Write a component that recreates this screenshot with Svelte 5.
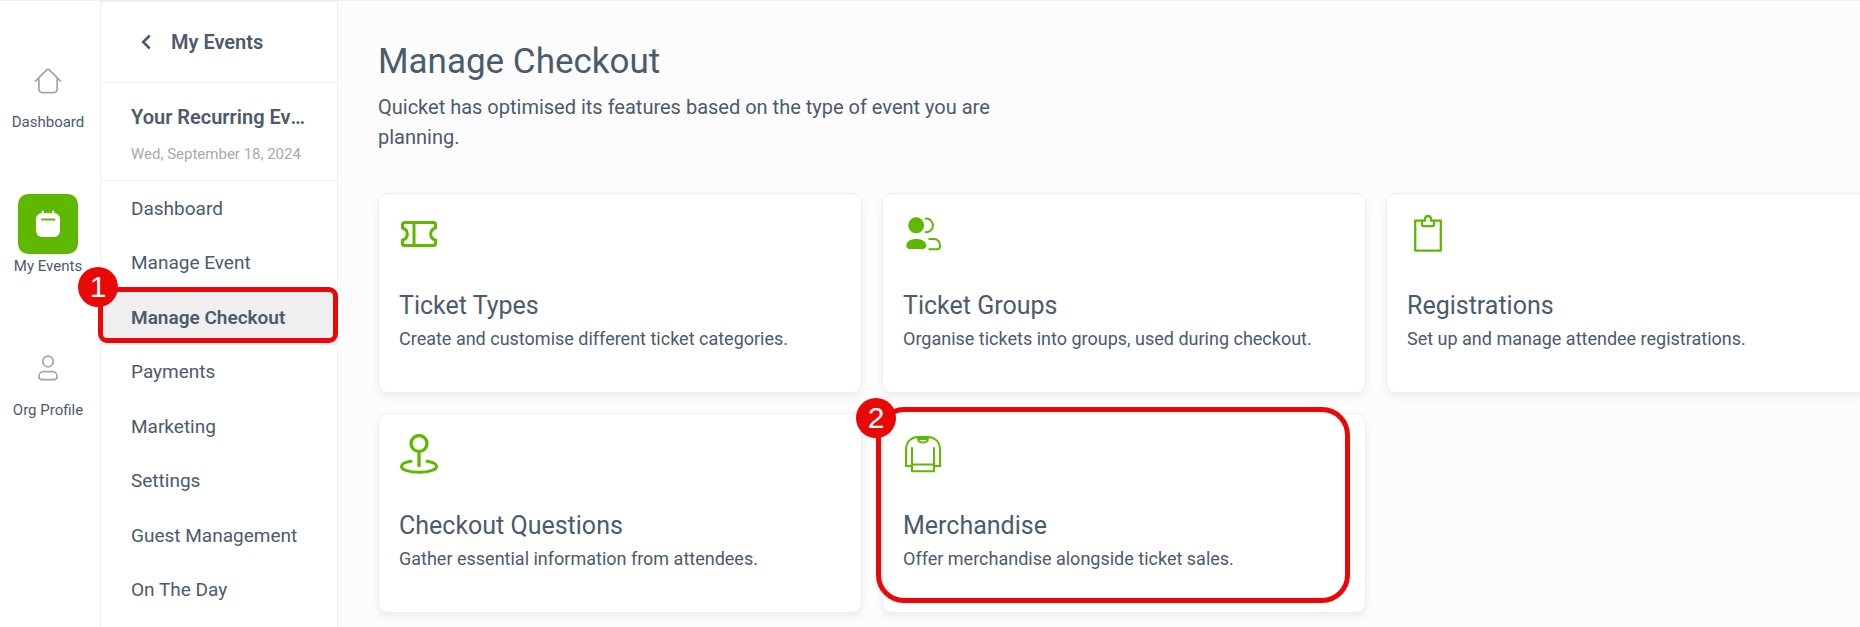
<script lang="ts">
  const eventName = 'Your Recurring Event';
  const eventDate = 'Wed, September 18, 2024';

  const railLinks = [
    { label: 'Dashboard', icon: 'home', active: false },
    { label: 'My Events', icon: 'calendar', active: true },
    { label: 'Org Profile', icon: 'person', active: false }
  ];

  //step marks the items that carry a numbered callout
  const menu = [
    { label: 'Dashboard' },
    { label: 'Manage Event' },
    { label: 'Manage Checkout', active: true, step: 1 },
    { label: 'Payments' },
    { label: 'Marketing' },
    { label: 'Settings' },
    { label: 'Guest Management' },
    { label: 'On The Day' }
  ];

  const cards = [
    { title: 'Ticket Types', text: 'Create and customise different ticket categories.', icon: 'ticket' },
    { title: 'Ticket Groups', text: 'Organise tickets into groups, used during checkout.', icon: 'groups' },
    { title: 'Registrations', text: 'Set up and manage attendee registrations.', icon: 'clipboard' },
    { title: 'Checkout Questions', text: 'Gather essential information from attendees.', icon: 'pin' },
    { title: 'Merchandise', text: 'Offer merchandise alongside ticket sales.', icon: 'shirt', step: 2 }
  ];
</script>

<div class="layout">
  <nav class="rail" aria-label="Main">
    {#each railLinks as link}
      <a class="rail-link" href="#{link.icon}">
        <span class="rail-icon" class:active={link.active}>
          <svg width="30" height="30" viewBox="0 0 30 30" fill="none" stroke="currentColor" stroke-width="1.7" stroke-linecap="round" stroke-linejoin="round" aria-hidden="true">
            {#if link.icon === 'home'}
              <path d="M2.500 16.200 13.400 5.100a2.200 2.200 0 0 1 3.200 0L27.500 16.200" />
              <path d="M5.900 13v11.600a3 3 0 0 0 3 3h12.200a3 3 0 0 0 3-3V13" />
            {:else if link.icon === 'calendar'}
              <rect x="3" y="4" width="24" height="24" rx="6" fill="currentColor" stroke="none" />
              <path d="M9.700 2.500v3M20.300 2.500v3" stroke-width="2" />
              <path class="slot" d="M9 10.500h12.400" stroke-width="2" />
            {:else}
              <circle cx="15" cy="8.500" r="5.300" />
              <path d="M10.600 18.700h8.800a4.700 4.700 0 0 1 4.700 4.700c0 2-1.300 3.200-3.200 3.200H9.100c-1.900 0-3.200-1.200-3.200-3.200a4.700 4.700 0 0 1 4.700-4.700Z" />
            {/if}
          </svg>
        </span>
        {link.label}
      </a>
    {/each}
  </nav>

  <aside class="sidebar">
    <a class="back" href="#events">
      <svg width="10" height="16" viewBox="0 0 10 16" fill="none" stroke="currentColor" stroke-width="2.600" aria-hidden="true">
        <path d="M8.700 1.500 2.200 8l6.500 6.500" />
      </svg>
      My Events
    </a>
    <div class="event">
      <h2>{eventName}</h2>
      <p>{eventDate}</p>
    </div>
    <nav class="menu" aria-label="Event">
      {#each menu as item}
        <a class:active={item.active} href="#menu">
          {item.label}
          {#if item.step}
            <span class="callout callout-menu"><b>{item.step}</b></span>
          {/if}
        </a>
      {/each}
    </nav>
  </aside>

  <main>
    <h1>Manage Checkout</h1>
    <p class="intro">Quicket has optimised its features based on the type of event you are planning.</p>

    <div class="cards">
      {#each cards as card}
        <a class="card" href="#{card.icon}">
          <svg width="40" height="40" viewBox="0 0 40 40" fill="none" stroke="currentColor" stroke-width="2" aria-hidden="true">
            {#if card.icon === 'ticket'}
              <path stroke-width="3" stroke-linejoin="round" d="M5.500 8.500h29a2 2 0 0 1 2 2v3.500c-3 .8-4.800 3-4.800 6s1.800 5.200 4.800 6v3.500a2 2 0 0 1-2 2h-29a2 2 0 0 1-2-2V26c3-.8 4.800-3 4.800-6s-1.800-5.200-4.800-6v-3.500a2 2 0 0 1 2-2ZM15 8.500v23" />
            {:else if card.icon === 'groups'}
              <circle cx="13.200" cy="11.300" r="8" fill="currentColor" stroke="none" />
              <path d="M12 25h2.500c5 0 8.700 3 8.700 6.500 0 2-1.300 3.500-3.500 3.500H6.800c-2.200 0-3.500-1.500-3.500-3.500C3.300 28 7 25 12 25Z" fill="currentColor" stroke="none" />
              <path d="M22 4.700a6.800 6.800 0 1 1 0 13.400M25.500 25H31a6 6 0 0 1 6 6v1.300a3 3 0 0 1-3 3h-8.500" />
            {:else if card.icon === 'clipboard'}
              <path stroke-width="2.300" stroke-linejoin="round" d="M15 6.700H8.200v30h25.600v-30H27" />
              <path stroke-width="2.300" stroke-linejoin="round" d="M15 6.700h3V5a3 3 0 0 1 6 0v1.700h3v3.500a2 2 0 0 1-2 2h-8a2 2 0 0 1-2-2Z" />
            {:else if card.icon === 'pin'}
              <circle cx="20" cy="9.500" r="8" stroke-width="3.300" />
              <path stroke-width="3.300" stroke-linecap="round" d="M20 18v13.500" />
              <path stroke-width="3" stroke-linecap="round" d="M12 27.200C6 28.100 2.500 30.200 2.500 32.500c0 3.300 7.800 5.700 17.500 5.700s17.500-2.400 17.500-5.700c0-2.300-3.500-4.400-9.500-5.300" />
            {:else}
              <path d="M9 32H3V16C3 7 9 3 15 3h10c6 0 12 4 12 13v16h-6" />
              <path stroke-linecap="round" d="M9 14v23.200h22V14M9 30.500h22" />
              <path d="M15 3v1.500c0 2.500 2 4 5 4s5-1.500 5-4V3M15.500 5h9" stroke-width="1.800" />
            {/if}
          </svg>
          <h3>{card.title}</h3>
          <p>{card.text}</p>
          {#if card.step}
            <span class="callout callout-card"><b>{card.step}</b></span>
          {/if}
        </a>
      {/each}
    </div>
  </main>
</div>

<style>
  :global(body) {
    background: #fcfcfc;
  }

  .layout {
    display: flex;
    min-height: 100vh;
    box-sizing: border-box;
    overflow: hidden;
    border-top: 1px solid #efefef;
    font-family: Roboto, "Liberation Sans", sans-serif;
    color: #4a5b6d;
  }

  a {
    color: inherit;
    text-decoration: none;
  }

  h1,
  h2,
  h3,
  p {
    margin: 0;
  }

  /* narrow rail on the far left */
  .rail {
    flex: 0 0 96px;
    display: flex;
    flex-direction: column;
    gap: 60px;
    padding: 49px 4px 0 0;
    background: #fff;
  }

  .rail-link {
    display: flex;
    flex-direction: column;
    align-items: center;
    font-size: 15px;
    line-height: 24px;
  }

  .rail-icon {
    display: flex;
    justify-content: center;
    align-items: center;
    width: 60px;
    height: 60px;
    border-radius: 10px;
    color: #a5a5a9;
  }

  .rail-icon.active {
    background: #5eb800;
    color: #fff;
  }

  .slot {
    stroke: #5eb800;
  }

  .sidebar {
    flex: 0 0 236px;
    min-width: 0;
    border: 1px solid #efefef;
    border-bottom: none;
    background: #fff;
  }

  .back {
    display: flex;
    align-items: center;
    gap: 20px;
    height: 80px;
    padding-left: 40px;
    border-bottom: 1px solid #efefef;
    font-size: 20px;
    font-weight: 600;
  }

  .event {
    padding: 19px 30px 14px;
    border-bottom: 1px solid #efefef;
  }

  .event h2 {
    overflow: hidden;
    text-overflow: ellipsis;
    white-space: nowrap;
    font-size: 20px;
    font-weight: 600;
    line-height: 30px;
  }

  .event p {
    margin-top: 10px;
    font-size: 15px;
    line-height: 24px;
    color: #aaa;
  }

  .menu {
    display: grid;
    grid-auto-rows: 1fr;
    height: 436px;
  }

  .menu a {
    position: relative;
    display: flex;
    align-items: center;
    padding-left: 30px;
    font-size: 19px;
  }

  .menu a.active {
    background: #efefef;
    font-weight: 600;
  }

  main {
    flex: 1;
    min-width: 0;
    padding: 40px 0 0 40px;
  }

  h1 {
    font-size: 35px;
    font-weight: 400;
    line-height: 42px;
  }

  .intro {
    max-width: 640px;
    margin-top: 9px;
    font-size: 20px;
    line-height: 30px;
  }

  .cards {
    display: grid;
    grid-template-columns: repeat(3, minmax(484px, 1fr));
    gap: 20px;
    margin-top: 41px;
    padding-bottom: 20px;
  }

  .card {
    position: relative;
    box-sizing: border-box;
    min-height: 200px;
    padding: 20px;
    border: 1px solid #efefef;
    border-radius: 10px;
    background: #fff;
    box-shadow: 0 4px 8px rgba(0, 0, 0, 0.06);
  }

  .card svg {
    display: block;
    color: #5eb800;
  }

  .card h3 {
    margin-top: 35px;
    font-size: 25px;
    font-weight: 400;
    line-height: 34px;
  }

  .card p {
    margin-top: 3px;
    font-size: 18px;
    line-height: 26px;
  }

  /* red numbered callouts laid over the page */
  .callout {
    position: absolute;
    z-index: 1;
    border: 5px solid #ea0707;
    pointer-events: none;
  }

  .callout b {
    position: absolute;
    top: -25px;
    left: -25px;
    width: 40px;
    height: 40px;
    border-radius: 50%;
    background: #ea0707;
    color: #fff;
    font-family: "Liberation Sans", Arial, sans-serif;
    font-size: 30px;
    font-weight: 400;
    line-height: 40px;
    text-align: center;
  }

  .callout-menu {
    inset: -3px -1px 2px -3px;
    border-radius: 9px;
  }

  .callout-card {
    inset: -7px 15px 9px -7px;
    border-radius: 28px;
  }

  .callout-card b {
    top: -14px;
  }
</style>
